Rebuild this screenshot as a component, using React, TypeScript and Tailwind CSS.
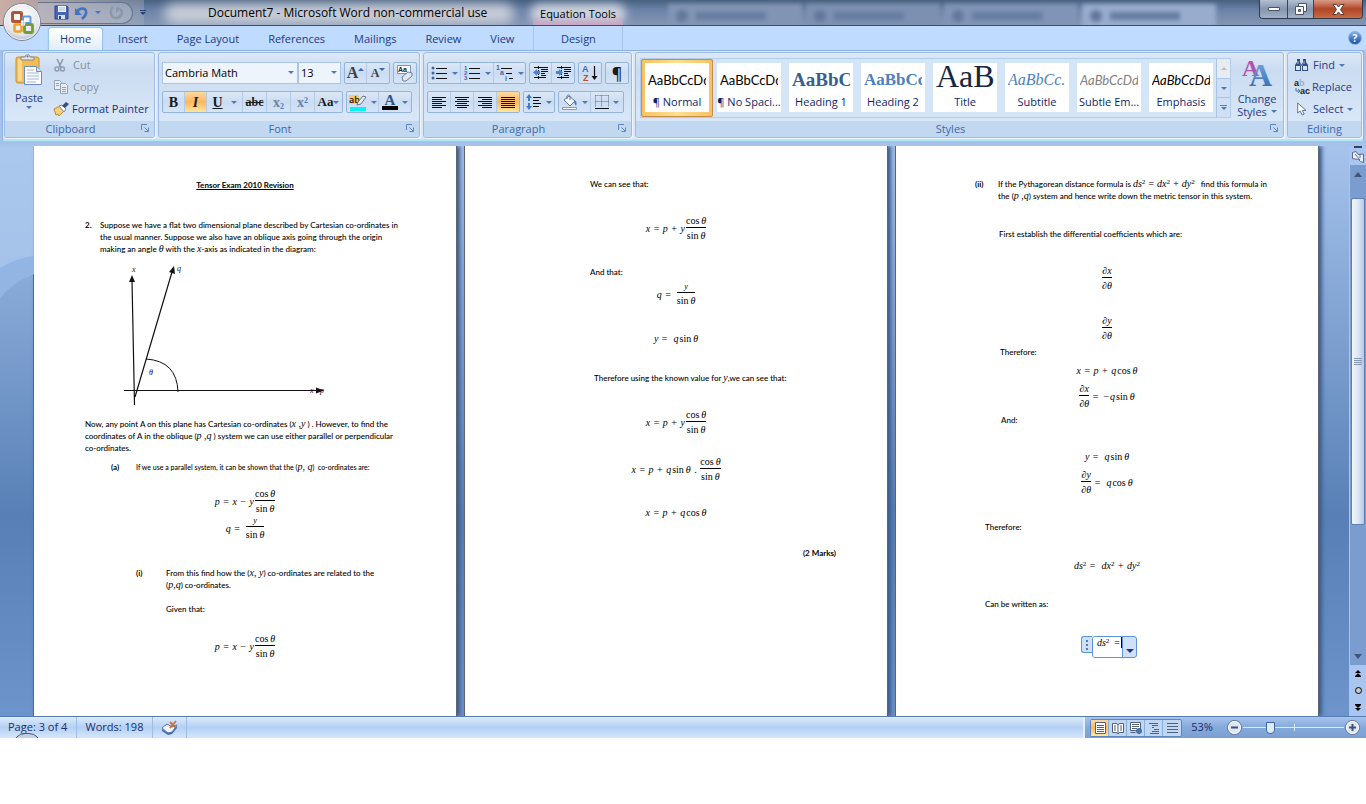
import { useState, type ReactNode } from "react";
import clsx from "clsx";

/* ---------- small shared pieces ---------- */

function Caret({ className = "text-[#4f78b4]" }: { className?: string }) {
  return (
    <svg width="6" height="3" viewBox="0 0 6 3" className={clsx("flex-none", className)} aria-hidden>
      <path d="M0 0h6L3 3z" fill="currentColor" />
    </svg>
  );
}

function Launcher({ label }: { label: string }) {
  return (
    <button aria-label={label} className="absolute right-[5px] top-[3px] text-[#5d86bd]">
      <svg width="8" height="8" viewBox="0 0 8 8" fill="none" stroke="currentColor">
        <path d="M.5 6V.5H6" />
        <path d="M3.500 3.500L7 7M7.500 3.500v4h-4" />
      </svg>
    </button>
  );
}

function Group({
  title,
  launcher = true,
  className,
  children,
}: {
  title: string;
  launcher?: boolean;
  className?: string;
  children: ReactNode;
}) {
  return (
    <section
      aria-label={title}
      className={clsx(
        "flex h-[86px] flex-col overflow-hidden rounded-[3px] border border-[#9cbce0] bg-linear-to-b from-[#dde8f6] from-0% via-[#cbdcf1] via-20% to-[#d8e7f8] to-80% shadow-[1px_1px_0_#eef5fc]",
        className,
      )}
    >
      <div className="min-h-0 flex-1">{children}</div>
      <div
        className={clsx(
          "relative h-4 flex-none bg-[#c1d8f0] text-center leading-4 text-[#3d68ac]",
          launcher && "pr-[18px]",
        )}
      >
        {title}
        {launcher && <Launcher label={`${title} options`} />}
      </div>
    </section>
  );
}

function Cluster({ children, className }: { children: ReactNode; className?: string }) {
  return (
    <div
      className={clsx(
        "flex h-[22px] flex-none divide-x divide-[#b4cbe8] overflow-hidden rounded-[2px] border border-[#94b4dc] bg-linear-to-b from-[#dce8f7] via-[#cbdcf2] to-[#d5e4f7]",
        className,
      )}
    >
      {children}
    </div>
  );
}

function Tool({
  label,
  active,
  caret,
  className = "w-[22px]",
  children,
}: {
  label: string;
  active?: boolean;
  caret?: boolean;
  className?: string;
  children: ReactNode;
}) {
  return (
    <button
      aria-label={label}
      aria-pressed={active}
      className={clsx(
        "flex flex-none items-center justify-center gap-1 text-[#1a1a1a]",
        active && "bg-linear-to-b from-[#fbd9a0] via-[#fdb75a] to-[#fee79b]",
        className,
      )}
    >
      {children}
      {caret && <Caret />}
    </button>
  );
}

/* ---------- icons ---------- */

function OfficeLogo() {
  return (
    <svg width="42" height="42" viewBox="0 0 42 42" aria-hidden>
      <defs>
        <radialGradient id="orb" cx=".5" cy=".35" r=".7">
          <stop offset="0" stopColor="#fff" />
          <stop offset=".7" stopColor="#e3e6ec" />
          <stop offset="1" stopColor="#a3adbd" />
        </radialGradient>
      </defs>
      <circle cx="21" cy="21" r="18.500" fill="url(#orb)" stroke="#7a8599" />
      <circle cx="21" cy="21" r="17.500" fill="none" stroke="#fff" strokeOpacity=".7" />
      <g fill="none">
        <rect x="11.500" y="11.500" width="9" height="9" rx="1" stroke="#b8532f" strokeWidth="3" />
        <rect x="22" y="15.500" width="7.500" height="6.500" rx="1" stroke="#5f9edb" strokeWidth="2" />
        <rect x="13.500" y="23.500" width="7" height="7" rx="1" stroke="#eda32c" strokeWidth="2.500" />
        <rect x="23.500" y="23.500" width="8" height="8" rx="1" stroke="#6f9d3a" strokeWidth="2.800" />
      </g>
      <path d="M20 19.500h4v5h-4z" fill="#f4f6fa" />
      <path d="M20 22h5M22.500 20v5" stroke="#c9cfd9" fill="none" />
    </svg>
  );
}

function SaveIcon() {
  return (
    <svg width="15" height="15" viewBox="0 0 15 15" aria-hidden>
      <path d="M1 1h12l1 1v12H1z" fill="#4665b8" stroke="#2d4489" />
      <path d="M4 1h8v6H4z" fill="#eef3fb" />
      <path d="M5 3h6M5 5h6" stroke="#a9bbd8" />
      <path d="M4 10h7v4H4z" fill="#d5deed" />
      <path d="M5 11h2v3H5z" fill="#2d4489" />
    </svg>
  );
}

function UndoIcon() {
  return (
    <svg width="14" height="14" viewBox="0 0 14 14" fill="none" aria-hidden>
      <path d="M2 6c2-4 8-5 9-1 1 3-1 5-4 8" stroke="#3f74c4" strokeWidth="2.600" />
      <path d="M0 2v7h7z" fill="#3f74c4" />
    </svg>
  );
}

function RedoIcon() {
  return (
    <svg width="15" height="15" viewBox="0 0 15 15" fill="none" aria-hidden>
      <path d="M4 2C0 6 2 13 7 13s8-6 4-9" stroke="#8d95a6" strokeWidth="2.400" />
      <path d="M7 2v6l5-5z" fill="#8d95a6" />
    </svg>
  );
}

function PasteIcon() {
  return (
    <svg width="28" height="32" viewBox="0 0 28 32" aria-hidden>
      <rect x="1" y="3" width="23" height="26" rx="2" fill="#f3bd52" stroke="#c98f33" />
      <path d="M3 5h4v22H3z" fill="#f9d78b" />
      <path d="M6 6V3h4c0-3 5-3 5 0h4v3z" fill="#dfe4ec" stroke="#7f8896" />
      <circle cx="12.500" cy="2.500" r="1" fill="#6a7382" />
      <path d="M9.500 12.500h12l5 5v13h-17z" fill="#fff" stroke="#6c8dbd" />
      <path d="M21.500 12.500v5h5" fill="#dbe7f7" stroke="#6c8dbd" />
      <path d="M12 16h7M12 19h12M12 22h12M12 25h12M12 28h9" stroke="#9db6da" />
    </svg>
  );
}

function CutIcon() {
  return (
    <svg width="14" height="14" viewBox="0 0 14 14" fill="none" stroke="#8f9aab" aria-hidden>
      <path d="M4 1l4 8M10 1L6 9" strokeWidth="1.600" />
      <circle cx="4" cy="11" r="2" strokeWidth="1.400" />
      <circle cx="9.500" cy="11" r="2" strokeWidth="1.400" />
    </svg>
  );
}

function CopyIcon() {
  return (
    <svg width="16" height="14" viewBox="0 0 16 14" fill="#e9eef6" stroke="#94a1b6" aria-hidden>
      <path d="M1.500.5h5l2 2v7h-7z" />
      <path d="M7.500 3.500h5l2 2v8h-7z" />
      <path d="M3 3.500h3M3 5.500h3M9 7.500h4M9 9.500h4M9 11.500h4" />
    </svg>
  );
}

function BrushIcon() {
  return (
    <svg width="16" height="15" viewBox="0 0 16 15" aria-hidden>
      <path d="M1 7l6-3 4 5-5 5-1-2-2 1z" fill="#f4cf7c" stroke="#b98532" />
      <path d="M6 4l3-1 4 4-2 3z" fill="#fff" stroke="#7a8699" />
      <path d="M9 4l4-4 3 2-4 4z" fill="#364d7d" />
    </svg>
  );
}

function EraserIcon() {
  return (
    <svg width="18" height="18" viewBox="0 0 18 18" aria-hidden>
      <path d="M1.500 1.500h13v8h-13z" fill="#fff" stroke="#7b93b8" />
      <text x="2" y="8" fontSize="7" fontWeight="700" fontFamily="Liberation Sans" fill="#222">Aa</text>
      <path d="M6 13l6-5 4 1v3l-6 5H7z" fill="#e3e7ef" stroke="#6d7f9d" />
    </svg>
  );
}

function HighlighterIcon() {
  return (
    <svg width="18" height="17" viewBox="0 0 18 17" aria-hidden>
      <path d="M0 1h10v9H0z" fill="#fcc968" />
      <text x="0" y="9" fontSize="9" fontFamily="Open Sans" fontWeight="600" fill="#111">ab</text>
      <path d="M8 11l1-3 5-6 3 1-5 7z" fill="#e9edf4" stroke="#63748f" />
      <path d="M1 13h16v4H1z" fill="#00f5ff" />
    </svg>
  );
}

function BulletsIcon({ kind }: { kind: "dots" | "numbers" | "levels" }) {
  return (
    <svg width="18" height="16" viewBox="0 0 18 16" aria-hidden>
      {kind === "dots" && (
        <g fill="#3c66a8">
          <circle cx="3" cy="3" r="1.500" />
          <circle cx="3" cy="8" r="1.500" />
          <circle cx="3" cy="13" r="1.500" />
        </g>
      )}
      {kind === "numbers" && (
        <g fill="#3c66a8" fontSize="6" fontWeight="700" fontFamily="Liberation Sans">
          <text x="1" y="5">1</text>
          <text x="1" y="10">2</text>
          <text x="1" y="15">3</text>
        </g>
      )}
      {kind === "levels" ? (
        <g>
          <g fill="#3c66a8" fontSize="7" fontWeight="700" fontFamily="Liberation Sans">
            <text x="0" y="5">1</text>
            <text x="4" y="10">a</text>
            <text x="9" y="16">i</text>
          </g>
          <path d="M5 3.500h11M10 8.500h6M13 13.500h4" stroke="#111" />
        </g>
      ) : (
        <path d="M6 3.500h11M6 8.500h11M6 13.500h11" stroke="#111" />
      )}
    </svg>
  );
}

function IndentIcon({ right }: { right?: boolean }) {
  return (
    <svg width="17" height="14" viewBox="0 0 17 14" fill="none" stroke="#111" aria-hidden>
      <path d="M2 1.500h14M9 3.500h7M9 5.500h7M9 7.500h4M9 9.500h5M2 11.500h12" />
      <path d="M6.500 0v14" strokeDasharray="1 1" />
      <path
        d={right ? "M1 5h3V3l4 3.500L4 10V8H1z" : "M8 5H5V3L1 6.500 5 10V8h3z"}
        fill="#4584cf"
        stroke="none"
      />
    </svg>
  );
}

function SortIcon() {
  return (
    <svg width="16" height="18" viewBox="0 0 16 18" aria-hidden>
      <text x="0" y="8" fontSize="9" fontWeight="700" fontFamily="Liberation Sans" fill="#3c6fb5">A</text>
      <text x="1" y="17" fontSize="9" fontWeight="700" fontFamily="Liberation Sans" fill="#b4532f">Z</text>
      <path d="M12.500 2v12" stroke="#111" strokeWidth="1.200" />
      <path d="M9.500 12h6l-3 4z" fill="#111" />
    </svg>
  );
}

const ALIGN_PATHS = {
  left: "M0 .5h14M0 2.500h10M0 4.500h14M0 6.500h10M0 8.500h14M0 10.500h10",
  center: "M0 .5h14M2 2.500h10M0 4.500h14M2 6.500h10M0 8.500h14M2 10.500h10",
  right: "M0 .5h14M4 2.500h10M0 4.500h14M4 6.500h10M0 8.500h14M4 10.500h10",
  justify: "M0 .5h14M0 2.500h14M0 4.500h14M0 6.500h14M0 8.500h14M0 10.500h14",
};

function AlignIcon({ kind }: { kind: keyof typeof ALIGN_PATHS }) {
  return (
    <svg width="14" height="11" viewBox="0 0 14 11" stroke="#111" aria-hidden>
      <path d={ALIGN_PATHS[kind]} />
    </svg>
  );
}

function SpacingIcon() {
  return (
    <svg width="16" height="16" viewBox="0 0 16 16" aria-hidden>
      <path d="M3 0l3 4H4v3H2V4H0zM3 16l3-4H4V9H2v3H0z" fill="#3f7cc6" />
      <path d="M7 3.500h8M7 6.500h6M7 9.500h8M7 12.500h6" stroke="#111" />
    </svg>
  );
}

function BucketIcon() {
  return (
    <svg width="17" height="17" viewBox="0 0 17 17" aria-hidden>
      <path d="M3 6l5-4 6 5-5 5z" fill="#f5f8fd" stroke="#63748f" />
      <path d="M6 5V2c1-2 3-1 3 1v3" fill="none" stroke="#63748f" />
      <path d="M13 6c3 1 3 4 2 6-1-2-2-3-2-6z" fill="#3f7cc6" />
      <path d="M1.500 13.500h14v2h-14z" fill="#fff" stroke="#8a9cb8" />
    </svg>
  );
}

function BorderIcon() {
  return (
    <svg width="14" height="14" viewBox="0 0 14 14" fill="none" aria-hidden>
      <path d="M.5.5h13M.5.5v12M13.500.5v12M6.500.5v12M.5 6.500h13" stroke="#5c6c88" strokeDasharray="1 1" />
      <path d="M0 13.500h14" stroke="#111" />
    </svg>
  );
}

function ChangeStylesIcon() {
  return (
    <svg width="32" height="30" viewBox="0 0 32 30" aria-hidden>
      <defs>
        <linearGradient id="styleBlue" x1="0" y1="0" x2="0" y2="1">
          <stop offset="0" stopColor="#7cb0e6" />
          <stop offset="1" stopColor="#2b66ad" />
        </linearGradient>
      </defs>
      <g fontWeight="700" fontFamily="Liberation Serif">
        <text x="1" y="18" fontSize="24" fill="#b152ae">A</text>
        <text x="8" y="28" fontSize="32" fill="url(#styleBlue)">A</text>
      </g>
    </svg>
  );
}

function FindIcon() {
  return (
    <svg width="15" height="14" viewBox="0 0 15 14" aria-hidden>
      <path d="M3 1h3v3l1 2v7H1V7l2-3zM9 1h3v3l2 3v6H8V6l1-2z" fill="#334f80" />
      <path d="M2 8h4v4H2zM9 8h4v4H9z" fill="#d5e3f6" />
      <path d="M4 3v3M10 3v3" stroke="#a9c1e4" />
      <path d="M6 6h3v2H6z" fill="#5a79ad" />
    </svg>
  );
}

function ReplaceIcon() {
  return (
    <svg width="16" height="16" viewBox="0 0 16 16" aria-hidden>
      <g fontSize="9" fontWeight="700" fontFamily="Liberation Sans">
        <text x="0" y="7" fill="#222">a</text>
        <text x="5" y="7" fill="#a4afc2">b</text>
        <text x="6" y="15" fill="#222">ac</text>
      </g>
      <path d="M2 9v3h3M4 10l2 2-2 2" fill="none" stroke="#3f6fb5" />
    </svg>
  );
}

function PointerIcon() {
  return (
    <svg width="10" height="14" viewBox="0 0 10 14" aria-hidden>
      <path d="M.7 1v10l2.500-2 2 4 2-1-2-3.600H9z" fill="#fff" stroke="#63748f" />
    </svg>
  );
}

/* ---------- title bar and tabs ---------- */

const TASK_GHOSTS = ["bg-[#8194b3]", "bg-[#7c90b1]", "bg-[#7f94b6]", "bg-[#98acce]"];

function TitleBar() {
  return (
    <header className="relative flex h-[26px] items-center overflow-hidden border-b border-[#3c4d66] bg-linear-to-b from-[#48617f] via-[#6c83a8] via-40% to-[#8496b4]">
      {/* glass: blurred windows showing through the frame */}
      <div aria-hidden className="absolute inset-0 flex">
        <div className="h-full w-36 bg-linear-to-r from-[#c9aea5] to-[#a5aebd]/40" />
        <div className="ml-5 mt-1 h-5 w-[350px] rounded-full bg-[#c9ced8] blur-[6px]" />
        <div className="ml-4 mt-1 h-5 w-24 rounded-full bg-[#cdd3dd] blur-[5px]" />
        <div className="ml-auto flex gap-1 pr-[150px] pt-1">
          {TASK_GHOSTS.map((shade) => (
            <div key={shade} className={clsx("flex h-6 w-[134px] items-center gap-2 px-2 blur-[2px]", shade)}>
              <div className="h-3 w-3 rounded-full bg-[#62779b]" />
              <div className="h-2 w-[70px] bg-[#667ca1]" />
            </div>
          ))}
        </div>
      </div>

      <div className="relative ml-[38px] flex h-[22px] w-[95px] items-center rounded-r-full border border-l-0 border-[#66758f] bg-[#b9c3d6]/40 pl-4">
        <button aria-label="Save"><SaveIcon /></button>
        <button aria-label="Undo" className="ml-1.5 flex items-center gap-1.5">
          <UndoIcon />
          <Caret className="text-[#3f74c4]" />
        </button>
        <button aria-label="Redo" className="ml-2"><RedoIcon /></button>
      </div>
      <button aria-label="Customize Quick Access Toolbar" className="relative ml-[7px] flex flex-col items-center gap-px text-[#26427c]">
        <span className="h-px w-[6px] bg-current" />
        <Caret className="text-[#26427c]" />
      </button>
      <h1 className="relative ml-[62px] text-[12px] leading-4 text-black">
        Document7 - Microsoft Word non-commercial use
      </h1>
      <div className="absolute left-[533px] top-0 h-full w-[90px] bg-linear-to-b from-transparent from-60% to-[#d9a5c4]/70 pt-1.5 text-center leading-4 text-black">
        Equation Tools
      </div>

      <div className="absolute right-[3px] top-0 flex h-[19px] divide-x divide-[#3a4458] overflow-hidden rounded-b-[4px] border border-t-0 border-[#2f3a4d] text-white">
        <button aria-label="Minimize" className="flex w-7 items-center justify-center bg-linear-to-b from-[#b4c0d2] via-[#8595ae] to-[#a1b1c9]">
          <svg width="12" height="4" viewBox="0 0 12 4"><path d="M.5.5h11v3H.5z" fill="#fff" stroke="#4c5669" /></svg>
        </button>
        <button aria-label="Restore" className="flex w-[26px] items-center justify-center bg-linear-to-b from-[#b4c0d2] via-[#8595ae] to-[#a1b1c9]">
          <svg width="12" height="12" viewBox="0 0 12 12" fill="#fff" stroke="#4c5669">
            <path d="M3.500.5h8v8h-8z" />
            <path d="M.5 3.500h8v8h-8z" />
            <path d="M3.500 6.500h2v2h-2z" fill="#7f8ea7" />
          </svg>
        </button>
        <button aria-label="Close" className="flex w-[48px] items-center justify-center bg-linear-to-b from-[#d89a86] via-[#b04526] to-[#c96a43]">
          <svg width="13" height="11" viewBox="0 0 13 11"><path d="M1 .5h3.500l2 2.500 2-2.500H12L8.500 5.500l3.500 5H8.500l-2-2.500-2 2.500H1l3.500-5z" fill="#fff" stroke="#5b3a35" /></svg>
        </button>
      </div>
    </header>
  );
}

const TABS = ["Home", "Insert", "Page Layout", "References", "Mailings", "Review", "View"];

function TabStrip() {
  const [tab, setTab] = useState("Home");
  return (
    <nav className="flex h-6 items-end gap-px bg-[#bfdbff] pl-12 text-[#253a86]" aria-label="Ribbon tabs">
      {TABS.map((t) => (
        <button
          key={t}
          onClick={() => setTab(t)}
          className={clsx(
            "h-[23px] leading-[22px]",
            t === tab
              ? "rounded-t-[4px] border border-b-0 border-[#9ac6ec] bg-linear-to-b from-white to-[#e1edfb] px-[11px] shadow-[0_0_2px_#7fe0f5]"
              : "px-[14px]",
          )}
        >
          {t}
        </button>
      ))}
      <div className="ml-1 flex h-full w-[90px] items-end justify-center border-x border-[#a9c5ea]">
        <button className="h-[23px] leading-[22px]">Design</button>
      </div>
      <button
        aria-label="Help"
        className="mb-[5px] ml-auto mr-1 flex h-[14px] w-[14px] items-center justify-center rounded-full border border-[#8bb0e0] bg-linear-to-b from-[#7fb1ee] to-[#1a4fa5] text-[10px] font-bold leading-none text-white"
      >
        ?
      </button>
    </nav>
  );
}

/* ---------- ribbon ---------- */

function ClipboardGroup() {
  return (
    <Group title="Clipboard" className="w-[151px]">
      <div className="flex h-full pt-px">
        <button className="flex w-12 flex-none flex-col items-center text-[#253a86]">
          <PasteIcon />
          <span className="mt-1 leading-4">Paste</span>
          <Caret />
        </button>
        <div className="flex flex-col items-start">
          <button disabled className="flex h-[22px] items-center gap-1.5 text-[#8b909a]">
            <CutIcon />
            Cut
          </button>
          <button disabled className="flex h-[22px] items-center gap-1 text-[#8b909a]">
            <CopyIcon />
            Copy
          </button>
          <button className="flex h-[22px] items-center gap-[3px] text-[#1c2f7a]">
            <BrushIcon />
            Format Painter
          </button>
        </div>
      </div>
    </Group>
  );
}

function Combo({ label, options, className }: { label: string; options: string[]; className: string }) {
  return (
    <label className={clsx("relative block h-[22px] flex-none", className)}>
      <span className="sr-only">{label}</span>
      <select className="h-full w-full appearance-none border border-[#abc4e5] bg-[#edf4fc] px-[2px] text-black outline-none">
        {options.map((o) => (
          <option key={o}>{o}</option>
        ))}
      </select>
      <span className="pointer-events-none absolute right-1 top-[9px]">
        <Caret />
      </span>
    </label>
  );
}

function FontGroup() {
  return (
    <Group title="Font" className="w-[262px]">
      <div className="flex flex-col gap-[7px] pl-[3px] pt-[9px]">
        <div className="flex gap-[3px]">
          <div className="flex flex-none">
            <Combo label="Font" options={["Cambria Math", "Calibri"]} className="w-[136px]" />
            <Combo label="Font size" options={["13", "11"]} className="w-[43px]" />
          </div>
          <Cluster>
            <Tool label="Grow font">
              <b className="font-['Liberation_Serif'] text-[16px] text-[#3a3f4a]">A</b>
              <Caret className="-ml-1 mb-2 rotate-180 text-[#3c66a8]" />
            </Tool>
            <Tool label="Shrink font">
              <b className="font-['Liberation_Serif'] text-[12px] text-[#3a3f4a]">A</b>
              <Caret className="-ml-1 mb-2 text-[#3c66a8]" />
            </Tool>
          </Cluster>
          <Cluster>
            <Tool label="Clear formatting"><EraserIcon /></Tool>
          </Cluster>
        </div>
        <div className="flex gap-[3px] font-['Liberation_Serif'] text-[14px]">
          <Cluster>
            <Tool label="Bold"><b>B</b></Tool>
            <Tool label="Italic" active><b className="italic">I</b></Tool>
            <Tool label="Underline" caret className="w-9">
              <b className="mr-1 underline">U</b>
            </Tool>
            <Tool label="Strikethrough" className="w-6">
              <b className="text-[12px] line-through">abc</b>
            </Tool>
            <Tool label="Subscript" className="w-6">
              <span className="font-bold text-[#71829f]">x<sub className="text-[8px] text-[#4a7fc4]">2</sub></span>
            </Tool>
            <Tool label="Superscript" className="w-6">
              <span className="font-bold text-[#71829f]">x<sup className="text-[8px] text-[#4a7fc4]">2</sup></span>
            </Tool>
            <Tool label="Change case" caret className="w-[27px]">
              <b className="-mr-1 text-[13px]">Aa</b>
            </Tool>
          </Cluster>
          <Cluster>
            <Tool label="Text highlight colour" caret className="w-8"><HighlighterIcon /></Tool>
            <Tool label="Font colour" caret className="w-8">
              <span className="flex w-4 flex-col text-center">
                <b className="text-[15px] leading-3 text-[#2c5591]">A</b>
                <span className="h-1 bg-black" />
              </span>
            </Tool>
          </Cluster>
        </div>
      </div>
    </Group>
  );
}

function ParagraphGroup() {
  return (
    <Group title="Paragraph" className="w-[209px]">
      <div className="flex flex-col gap-[7px] pl-[3px] pt-[9px]">
        <div className="flex gap-[3px]">
          <Cluster>
            <Tool label="Bullets" caret className="w-[33px]"><BulletsIcon kind="dots" /></Tool>
            <Tool label="Numbering" caret className="w-[33px]"><BulletsIcon kind="numbers" /></Tool>
            <Tool label="Multilevel list" caret className="w-[31px]"><BulletsIcon kind="levels" /></Tool>
          </Cluster>
          <Cluster>
            <Tool label="Decrease indent"><IndentIcon /></Tool>
            <Tool label="Increase indent"><IndentIcon right /></Tool>
          </Cluster>
          <Cluster><Tool label="Sort"><SortIcon /></Tool></Cluster>
          <Cluster>
            <Tool label="Show marks"><span className="text-[16px] font-semibold leading-none">¶</span></Tool>
          </Cluster>
        </div>
        <div className="flex gap-[3px]">
          <Cluster>
            <Tool label="Align left" className="w-[23px]"><AlignIcon kind="left" /></Tool>
            <Tool label="Centre" className="w-[23px]"><AlignIcon kind="center" /></Tool>
            <Tool label="Align right" className="w-[23px]"><AlignIcon kind="right" /></Tool>
            <Tool label="Justify" active><AlignIcon kind="justify" /></Tool>
          </Cluster>
          <Cluster>
            <Tool label="Line spacing" caret className="w-[30px]"><SpacingIcon /></Tool>
          </Cluster>
          <Cluster>
            <Tool label="Shading" caret className="w-8"><BucketIcon /></Tool>
            <Tool label="Borders" caret className="w-8"><BorderIcon /></Tool>
          </Cluster>
        </div>
      </div>
    </Group>
  );
}

const STYLES = [
  { name: "¶ Normal", sample: "AaBbCcDd", look: "font-['Lato'] text-[13px] text-black" },
  { name: "¶ No Spaci...", sample: "AaBbCcDd", look: "font-['Lato'] text-[13px] text-black" },
  { name: "Heading 1", sample: "AaBbCc", look: "font-['Liberation_Serif'] text-[19px] font-bold text-[#365f91]" },
  { name: "Heading 2", sample: "AaBbCc", look: "font-['Liberation_Serif'] text-[17px] font-bold text-[#4f81bd]" },
  { name: "Title", sample: "AaB", look: "font-['Liberation_Serif'] text-[32px] leading-5 text-[#17263d]" },
  { name: "Subtitle", sample: "AaBbCc.", look: "font-['Liberation_Serif'] text-[16px] italic text-[#4f81bd]" },
  { name: "Subtle Em...", sample: "AaBbCcDd", look: "font-['Lato'] text-[13px] italic text-[#808080]" },
  { name: "Emphasis", sample: "AaBbCcDd", look: "font-['Lato'] text-[13px] italic text-black" },
];

function StylesGroup() {
  return (
    <Group title="Styles" className="min-w-0 flex-1">
      <div className="flex pl-1 pt-[5px]">
        <div className="flex h-[60px] min-w-0 flex-1 border border-[#b3cdec] bg-[#d5e5f8]">
          <div className="flex min-w-0 flex-1 overflow-hidden">
            {STYLES.map((s, i) => (
              <button
                key={s.name}
                className={clsx(
                  "flex w-[72px] flex-none p-[4px]",
                  i === 0 && "rounded-[2px] bg-linear-to-r from-[#f6c25e] via-[#fde08e] to-[#f6c25e] outline-1 -outline-offset-1 outline-[#c98a4b]",
                )}
              >
                <span className="flex h-[49px] w-full flex-col overflow-hidden bg-white">
                  <span className="mx-[3px] mt-[3px] block h-7 overflow-hidden text-left leading-7 whitespace-nowrap">
                    <span className={clsx("block", s.look)}>{s.sample}</span>
                  </span>
                  <span className="text-center leading-4 whitespace-nowrap text-[#0d1f6b]">{s.name}</span>
                </span>
              </button>
            ))}
          </div>
          <div className="flex w-[14px] flex-none flex-col divide-y divide-[#a9c4e6] border-l border-[#a9c4e6]">
            <button aria-label="Row up" className="flex flex-1 items-center justify-center bg-[#e8ebf0]">
              <Caret className="rotate-180 text-[#b9bcc2]" />
            </button>
            <button aria-label="Row down" className="flex flex-1 items-center justify-center bg-[#cfe0f6]">
              <Caret />
            </button>
            <button aria-label="More styles" className="flex flex-1 flex-col items-center justify-center gap-px bg-[#cfe0f6]">
              <span className="h-px w-[7px] bg-[#5b7fb5]" />
              <Caret />
            </button>
          </div>
        </div>
        <button className="flex w-[52px] flex-none flex-col items-center leading-[13px] text-[#253a86]">
          <ChangeStylesIcon />
          <span className="mt-1">Change</span>
          <span className="flex items-center gap-1">
            Styles <Caret />
          </span>
        </button>
      </div>
    </Group>
  );
}

function EditingGroup() {
  return (
    <Group title="Editing" launcher={false} className="w-[75px]">
      <div className="flex flex-col items-start pl-1.5 pt-px text-[#253a86]">
        <button className="flex h-[22px] items-center gap-1"><FindIcon />Find <Caret /></button>
        <button className="flex h-[22px] items-center gap-0.5"><ReplaceIcon />Replace</button>
        <button className="flex h-[22px] items-center gap-1">
          <span className="flex w-[15px] justify-center"><PointerIcon /></span>
          Select <Caret />
        </button>
      </div>
    </Group>
  );
}

function Ribbon() {
  return (
    <div className="bg-[#a6c1ea] px-[2px] pb-[5px]">
      <div className="flex gap-[3px] rounded-[3px] border border-b-2 border-[#8db2e3] border-b-[#aee9f5] bg-[#dbe7f6] px-px py-px">
        <ClipboardGroup />
        <FontGroup />
        <ParagraphGroup />
        <StylesGroup />
        <EditingGroup />
      </div>
    </div>
  );
}

/* ---------- document ---------- */

function M({ children }: { children: ReactNode }) {
  return <i className="font-['Liberation_Serif'] text-[10px]">{children}</i>;
}

function Frac({ top, bottom, tight }: { top: ReactNode; bottom: ReactNode; tight?: boolean }) {
  return (
    <span className="inline-flex flex-col items-center">
      <span className={tight ? "text-[8px] leading-[10px]" : "leading-3"}>{top}</span>
      <span className="mb-0.5 h-px w-full bg-black" />
      <span className="leading-3">{bottom}</span>
    </span>
  );
}

function Eq({ className, children }: { className?: string; children: ReactNode }) {
  return (
    <div
      className={clsx(
        "flex items-center justify-center gap-px whitespace-pre font-['Liberation_Serif'] text-[10px] leading-3",
        className,
      )}
    >
      {children}
    </div>
  );
}

const cosT = <span>cos&thinsp;<i>θ</i></span>;
const sinT = <span>sin&thinsp;<i>θ</i></span>;

function Page({ children }: { children: ReactNode }) {
  return (
    <article className="border-x border-[#5b6470] bg-white px-[51px] font-['Lato'] text-[8px] font-medium leading-3 text-black shadow-[3px_0_4px_#3d5b8a]">
      {children}
    </article>
  );
}

function AxesDiagram() {
  return (
    <svg
      viewBox="85 259 320 155"
      width="320"
      height="155"
      className="my-1 max-w-full"
      fill="none"
      stroke="#111"
      role="img"
      aria-label="Oblique axis q at angle θ to the x axis"
    >
      <path d="M134.500 405L132 280M124 390.500H320M135 397L172 272" strokeWidth="1.200" />
      <path d="M146 359q31 2 32 33" />
      <g fill="#111" stroke="none">
        <path d="M132 275l3 7h-6zM174 266l1 8-6-2zM324 390.500l-8 3v-6z" />
        <g fontFamily="Liberation Serif" fontStyle="italic" fontSize="8">
          <text x="132" y="272">x</text>
          <text x="177" y="271">q</text>
          <text x="149" y="375">θ</text>
          <text x="310" y="393">x</text>
          <text x="320" y="393">p</text>
        </g>
      </g>
    </svg>
  );
}

function PageOne() {
  return (
    <Page>
      <h2 className="pt-[33px] text-center font-bold underline">Tensor Exam 2010 Revision</h2>
      <div className="mt-7 flex">
        <b className="w-[15px] flex-none">2.</b>
        <p className="whitespace-nowrap">
          Suppose we have a flat two dimensional plane described by Cartesian co-ordinates in
          <br />
          the usual manner. Suppose we also have an oblique axis going through the origin
          <br />
          making an angle <M>θ</M> with the <M>x</M>-axis as indicated in the diagram:
        </p>
      </div>
      <AxesDiagram />
      <p className="whitespace-nowrap">
        Now, any point A on this plane has Cartesian co-ordinates (<M>x ,y</M> ) . However, to find the
        <br />
        coordinates of A in the oblique (<M>p ,q</M> ) system we can use either parallel or perpendicular
        <br />
        co-ordinates.
      </p>
      <div className="mt-[7px] flex whitespace-nowrap pl-[26px]">
        <b className="w-[25px] flex-none">(a)</b>
        <p className="text-[7px]">
          If we use a parallel system, it can be shown that the (<M>p, q</M>)&nbsp; co-ordinates are:
        </p>
      </div>
      <Eq className="mt-[15px]"><i>p</i> = <i>x</i> − <i>y</i><Frac top={cosT} bottom={sinT} /></Eq>
      <Eq className="mt-px"><i>q</i> =  <Frac tight top={<i>y</i>} bottom={sinT} /></Eq>
      <div className="mt-[26px] flex pl-[51px]">
        <b className="w-[30px] flex-none">(i)</b>
        <div className="whitespace-nowrap">
          <p>
            From this find how the (<M>x, y</M>) co-ordinates are related to the
            <br />
            (<M>p,q</M>) co-ordinates.
          </p>
          <p className="mt-3">Given that:</p>
        </div>
      </div>
      <Eq className="mt-[18px]"><i>p</i> = <i>x</i> − <i>y</i><Frac top={cosT} bottom={sinT} /></Eq>
    </Page>
  );
}

function PageTwo() {
  return (
    <Page>
      <p className="pl-[74px] pt-8">We can see that:</p>
      <Eq className="mt-[25px]"><i>x</i> = <i>p</i> + <i>y</i><Frac top={cosT} bottom={sinT} /></Eq>
      <p className="mt-6 pl-[74px]">And that:</p>
      <Eq className="mt-1"><i>q</i> =  <Frac tight top={<i>y</i>} bottom={sinT} /></Eq>
      <Eq className="mt-[26px]"><i>y</i> =  <i>q</i> {sinT}</Eq>
      <p className="mt-[27px] whitespace-nowrap pl-[78px]">
        Therefore using the known value for <M>y</M>,we can see that:
      </p>
      <Eq className="mt-[25px]"><i>x</i> = <i>p</i> + <i>y</i><Frac top={cosT} bottom={sinT} /></Eq>
      <Eq className="mt-5"><i>x</i> = <i>p</i> + <i>q</i> {sinT} . <Frac top={cosT} bottom={sinT} /></Eq>
      <Eq className="mt-6"><i>x</i> = <i>p</i> + <i>q</i> {cosT}</Eq>
      <p className="mt-7 text-right font-bold">(2 Marks)</p>
    </Page>
  );
}

const sq = (v: string) => <i>{v}<sup className="text-[7px] not-italic leading-none">2</sup></i>;

function EquationEditor() {
  return (
    <div className="mt-[26px] flex h-[22px] items-start justify-center pl-1">
      <button
        aria-label="Move equation"
        className="flex h-[17px] w-[11px] flex-col items-center justify-center gap-[2px] rounded-l-[3px] border border-r-0 border-[#5b95d8] bg-[#cfe1f8]"
      >
        <span className="h-[2px] w-[2px] bg-[#4a7fc4]" />
        <span className="h-[2px] w-[2px] bg-[#4a7fc4]" />
        <span className="h-[2px] w-[2px] bg-[#4a7fc4]" />
      </button>
      <div className="flex h-[22px] rounded-[3px] border border-[#5b95d8] bg-[#cfe1f8]">
        <div className="flex w-[29px] items-start justify-end rounded-l-[2px] bg-white font-['Liberation_Serif'] text-[10px] leading-3 whitespace-pre">
          {sq("ds")}  =<span className="ml-px h-[11px] w-px bg-black" />
        </div>
        <button aria-label="Equation options" className="flex w-[14px] items-end justify-center border-l border-[#5b95d8] pb-1">
          <svg width="8" height="4" viewBox="0 0 8 4"><path d="M0 0h8L4 4z" fill="#2a2f8f" /></svg>
        </button>
      </div>
    </div>
  );
}

function PageThree() {
  const d = (v: string) => <i>∂{v}</i>;
  return (
    <Page>
      <div className="flex whitespace-nowrap pl-7 pt-8">
        <b className="w-[23px] flex-none">(ii)</b>
        <p>
          If the Pythagorean distance formula is <M>{sq("ds")} = {sq("dx")} + {sq("dy")}</M> &nbsp; find this formula in
          <br />
          the (<M>p ,q</M>) system and hence write down the metric tensor in this system.
        </p>
      </div>
      <p className="mt-[26px] pl-[52px]">First establish the differential coefficients which are:</p>
      <Eq className="mt-[25px]"><Frac top={d("x")} bottom={d("θ")} /></Eq>
      <Eq className="mt-[23px]"><Frac top={d("y")} bottom={d("θ")} /></Eq>
      <p className="mt-1 pl-[53px]">Therefore:</p>
      <Eq className="mt-[7px]"><i>x</i> = <i>p</i> + <i>q</i> {cosT}</Eq>
      <Eq className="mt-[6px]"><Frac top={d("x")} bottom={d("θ")} /> =  −<i>q</i> {sinT}</Eq>
      <p className="mt-1 pl-[54px]">And:</p>
      <Eq className="mt-[25px]"><i>y</i> =  <i>q</i> {sinT}</Eq>
      <Eq className="mt-[6px]"><Frac top={d("y")} bottom={d("θ")} /> =  <i>q</i> {cosT}</Eq>
      <p className="mt-[25px] pl-[38px]">Therefore:</p>
      <Eq className="mt-[27px]">{sq("ds")} =  {sq("dx")} + {sq("dy")}</Eq>
      <p className="mt-[26px] pl-[38px]">Can be written as:</p>
      <EquationEditor />
    </Page>
  );
}

function ScrollColumn() {
  return (
    <div className="flex w-[17px] flex-none flex-col items-center bg-[#a9c6f0] pl-px">
      <div className="h-[2px] w-2 bg-[#33415c]" />
      <button aria-label="View ruler" className="flex h-[17px] items-center">
        <svg width="12" height="12" viewBox="0 0 12 12" fill="#eef3fb" stroke="#5a6c8c">
          <path d="M.5 1.500L4 .5l2 3 5.500-.5v8.500l-3-1-2-2-6-1z" />
          <path d="M3 3l5 6M8 3v4" />
        </svg>
      </button>
      <div className="flex w-full flex-1 flex-col items-center bg-[#7a9ccf]">
        <button aria-label="Scroll up" className="flex h-[33px] flex-none items-start pt-[7px]">
          <svg width="8" height="5" viewBox="0 0 8 5"><path d="M4 0l4 5H0z" fill="#3f5478" /></svg>
        </button>
        <div className="flex h-[327px] w-[14px] flex-none flex-col items-center justify-center gap-px rounded-[2px] border border-[#5d7fb5] bg-linear-to-r from-[#f2f6fc] via-[#dde7f5] to-[#b5c9e6]">
          <span className="h-px w-2 bg-[#8696b0]" />
          <span className="h-px w-2 bg-[#8696b0]" />
          <span className="h-px w-2 bg-[#8696b0]" />
          <span className="h-px w-2 bg-[#8696b0]" />
        </div>
        <button aria-label="Scroll down" className="mt-auto flex h-[13px] items-center pb-1">
          <svg width="8" height="5" viewBox="0 0 8 5"><path d="M0 0h8L4 5z" fill="#3f5478" /></svg>
        </button>
      </div>
      <div className="flex h-[51px] flex-none flex-col items-center justify-around">
        <button aria-label="Previous page">
          <svg width="6" height="7" viewBox="0 0 6 7"><path d="M3 0l3 3H0zM3 3l3 3H0zM0 6h6v1H0z" /></svg>
        </button>
        <button aria-label="Select browse object" className="h-[7px] w-[7px] rounded-full border border-black bg-[#c9c9c9]" />
        <button aria-label="Next page">
          <svg width="6" height="7" viewBox="0 0 6 7"><path d="M0 0h6v1H0zM0 1h6L3 4zM0 4h6L3 7z" /></svg>
        </button>
      </div>
    </div>
  );
}

function Workspace() {
  return (
    <main className="flex h-[570px]">
      <div className="relative grid min-w-0 flex-1 grid-cols-3 gap-[7px] overflow-hidden bg-linear-to-b from-[#a6c3ec] from-0% via-[#5880b6] via-65% to-[#6d95cc] pl-[33px] pr-[30px]">
        {/* lighter swoosh in the backdrop's upper left corner */}
        <svg aria-hidden viewBox="0 0 34 160" width="34" height="160" className="absolute left-0 top-0">
          <path d="M0 0h34v128Q12 136 0 152z" fill="#abc8ee" fillOpacity=".8" />
          <path d="M0 122Q16 112 34 110v18Q12 136 0 152z" fill="#8fb1e2" fillOpacity=".8" />
        </svg>
        <PageOne />
        <PageTwo />
        <PageThree />
      </div>
      <ScrollColumn />
    </main>
  );
}

/* ---------- status bar ---------- */

function ProofIcon() {
  return (
    <svg width="18" height="15" viewBox="0 0 18 15" aria-hidden>
      <path d="M1 8l5-4 5 3 5-2-5 7-4 1z" fill="#f4f7fc" stroke="#65789a" />
      <path d="M1 9l6 4 4-1 5-6v2l-5 6-4 1-6-4z" fill="#3c6fb5" />
      <path d="M9 2l6 6M15 1l-6 7" stroke="#d0702c" strokeWidth="1.800" />
    </svg>
  );
}

const VIEW_MODES = [
  { label: "Print Layout", d: "M2.500.5h10v11h-10zM4 3.500h7M4 5.500h7M4 7.500h7M4 9.500h7" },
  { label: "Full Screen Reading", d: "M7 2v10M1.500 1.500H5l2 1 2-1h3.500v9H9l-2 1-2-1H1.500zM3 4h2M3 6h2M3 8h2M9 4h2M9 6h2M9 8h2" },
  { label: "Web Layout", d: "M1.500.5h10v8h-10zM3 2.500h7M3 4.500h7M3 6.500h5M1.500 10.500h5" },
  { label: "Outline", d: "M2 1.500h9M5 3.500h6M5 5.500h2M7 7.500h5M5 9.500h7M3 11.500h9" },
  { label: "Draft", d: "M2 1.500h11M2 4.500h11M2 7.500h11M2 10.500h11" },
];

function ZoomButton({ label, d }: { label: string; d: string }) {
  return (
    <button aria-label={label} className="flex-none">
      <svg width="17" height="17" viewBox="0 0 17 17" fill="none">
        <circle cx="8.500" cy="8.500" r="7" fill="#dce6f4" stroke="#5a6e93" />
        <circle cx="8.500" cy="8.500" r="6" stroke="#fff" />
        <path d={d} stroke="#43536f" strokeWidth="2" />
      </svg>
    </button>
  );
}

function StatusBar() {
  const [view, setView] = useState("Print Layout");
  const [zoom, setZoom] = useState(25);
  return (
    <footer className="flex h-[22px] items-stretch border-t border-[#567db1] text-[#1b2e6e]">
      <div className="flex flex-1 items-stretch divide-x divide-[#9dbce6] bg-linear-to-b from-[#dcebfc] via-[#b3d0f3] via-50% to-[#d6e7fb]">
        <button className="relative w-[77px] overflow-hidden pl-2 text-left">
          Page: 3 of 4
          <span aria-hidden className="absolute left-[13px] top-4 h-6 w-7 rounded-full border border-[#49597a] bg-[#bcc3d3]/60" />
        </button>
        <button className="w-[76px]">Words: 198</button>
        <button aria-label="Proofing errors" className="flex w-[34px] items-center justify-center"><ProofIcon /></button>
        <div />
      </div>
      <div className="flex items-center border-l-2 border-[#e2eefc] bg-linear-to-b from-[#a7c4ec] via-[#85a9dc] via-50% to-[#7d9fd0] pl-[5px] pr-[5px]">
        <div className="flex h-[18px] divide-x divide-[#8badda] rounded-[2px] border border-[#5f86be] bg-[#c0d7f4]">
          {VIEW_MODES.map((m) => (
            <button
              key={m.label}
              aria-label={m.label}
              onClick={() => setView(m.label)}
              className={clsx("flex w-[18px] items-center justify-center", m.label === view && "bg-linear-to-b from-[#fbd9a0] via-[#fdb75a] to-[#fee79b]")}
            >
              <svg width="14" height="12" viewBox="0 0 14 12" fill="none" stroke="#52627e">
                <path d={m.d} fill={m.label === "Outline" || m.label === "Draft" ? "none" : "#fff"} />
                {m.label === "Web Layout" && <circle cx="10" cy="9" r="2.500" fill="#3f7cc6" />}
              </svg>
            </button>
          ))}
        </div>
        <button className="w-11 pr-1 text-center">53%</button>
        <ZoomButton label="Zoom out" d="M5 8.500h7" />
        <label className="relative flex w-[101px] items-center">
          <span className="sr-only">Zoom</span>
          <span aria-hidden className="absolute inset-x-0 h-px bg-[#dce9fa]" />
          <span aria-hidden className="absolute left-1/2 h-[7px] w-px bg-[#dce9fa]" />
          <input
            type="range"
            value={zoom}
            onChange={(e) => setZoom(Number(e.target.value))}
            className="relative h-[14px] w-full appearance-none bg-transparent [&::-webkit-slider-thumb]:h-3 [&::-webkit-slider-thumb]:w-[9px] [&::-webkit-slider-thumb]:appearance-none [&::-webkit-slider-thumb]:rounded-b-[4px] [&::-webkit-slider-thumb]:border [&::-webkit-slider-thumb]:border-[#3f66a5] [&::-webkit-slider-thumb]:bg-[#dfe9f7]"
          />
        </label>
        <ZoomButton label="Zoom in" d="M5 8.500h7M8.500 5v7" />
      </div>
    </footer>
  );
}

export default function App() {
  return (
    <div className="min-h-screen bg-white">
      <div className="relative font-['Open_Sans','Noto_Sans',sans-serif] text-[11px]">
        <TitleBar />
        <TabStrip />
        <button aria-label="Office button" className="absolute left-[1px] top-[1px]">
          <OfficeLogo />
        </button>
        <Ribbon />
        <Workspace />
        <StatusBar />
      </div>
    </div>
  );
}
